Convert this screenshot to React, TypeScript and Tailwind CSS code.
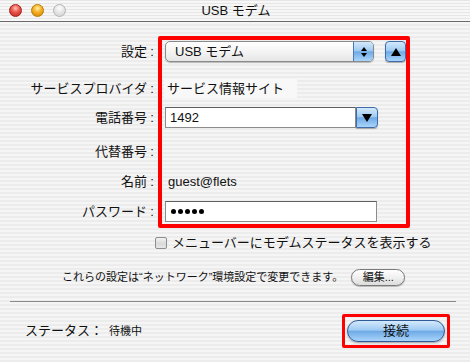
import type { ReactNode } from "react";

const font = "font-['Liberation_Sans','Noto_Sans_CJK_JP',sans-serif]";
const stripes =
  "bg-[repeating-linear-gradient(to_bottom,#ececec_0px,#ececec_2px,#f5f5f5_2px,#f5f5f5_4px)]";
const aquaBlue =
  "bg-[linear-gradient(to_bottom,#d4e9fc_0%,#9fcbf3_45%,#6faae6_52%,#a9d5fb_100%)]";

function Label({ text }: { text: string }) {
  return (
    <>
      <div className="w-[147px] text-right">{text}</div>
      <div className="w-[10px] text-center">:</div>
    </>
  );
}

function Row({ label, mt, children }: { label: string; mt: string; children?: ReactNode }) {
  return (
    <div className={`flex h-[21px] items-center ${mt}`}>
      <Label text={label} />
      <div className="ml-[8px] flex items-center">{children}</div>
    </div>
  );
}

function Light({ color }: { color: string }) {
  return <span className={`h-[13px] w-[13px] rounded-full ${color}`} />;
}

export default function App() {
  return (
    <div className={`relative h-[362px] w-[470px] overflow-hidden bg-white text-[13px] text-[#111] ${font}`}>
      <div className={`h-full w-full rounded-t-[6px] ${stripes}`}>
        {/* title bar */}
        <div className="relative flex h-[22px] items-center border-b border-[#6b6b6b] bg-[repeating-linear-gradient(to_bottom,#e6e6e6_0px,#e6e6e6_1px,#f7f7f7_1px,#f7f7f7_3px)]">
          <div className="ml-[9px] flex gap-[9px]">
            <Light color="border border-[#a8201a] bg-[radial-gradient(circle_at_50%_30%,#ffc2bb_0%,#ec5a4f_40%,#bd1f16_100%)]" />
            <Light color="border border-[#b77a00] bg-[radial-gradient(circle_at_50%_30%,#fff0b0_0%,#f8b429_40%,#d07d00_100%)]" />
            <Light color="border border-[#b4b4b4] bg-[radial-gradient(circle_at_50%_30%,#ffffff_0%,#e4e4e4_50%,#cfcfcf_100%)]" />
          </div>
          <div className="absolute left-0 right-0 top-0 flex h-[21px] items-center justify-center pl-[2px] text-[13px]">
            USB モデム
          </div>
        </div>

        {/* form */}
        <Row label="設定" mt="mt-[19px]">
          <div className="flex h-[21px] w-[209px] overflow-hidden rounded-[5px] border border-[#8a8a8a] bg-[linear-gradient(to_bottom,#ffffff_0%,#f4f4f4_50%,#e6e6e6_100%)] shadow-[0_1px_1px_rgba(0,0,0,0.25)]">
            <div className="flex flex-1 items-center pl-[9px]">USB モデム</div>
            <div className={`flex w-[20px] flex-col items-center justify-center gap-[2px] border-l border-[#4a78b8] ${aquaBlue}`}>
              <span className="h-0 w-0 border-x-[3px] border-b-[4px] border-x-transparent border-b-black" />
              <span className="h-0 w-0 border-x-[3px] border-t-[4px] border-x-transparent border-t-black" />
            </div>
          </div>
          <div className={`ml-[11px] flex h-[21px] w-[21px] items-center justify-center rounded-[4px] border border-[#3f6ba8] ${aquaBlue} shadow-[0_1px_1px_rgba(0,0,0,0.3)]`}>
            <span className="h-0 w-0 border-x-[5px] border-b-[8px] border-x-transparent border-b-black" />
          </div>
        </Row>

        <Row label="サービスプロバイダ" mt="mt-[16px]">
          <span className="-ml-[1px] w-[133px] bg-[#f8f8f8] pl-[3px]">サービス情報サイト</span>
        </Row>

        <Row label="電話番号" mt="mt-[8px]">
          <div className="flex h-[21px] w-[191px] items-center border border-[#8c8c8c] border-t-[#5e5e5e] bg-white pl-[4px]">
            1492
          </div>
          <div className={`flex h-[21px] w-[22px] items-center justify-center rounded-r-[4px] border border-[#3f6ba8] ${aquaBlue} shadow-[0_1px_1px_rgba(0,0,0,0.3)]`}>
            <span className="h-0 w-0 border-x-[5px] border-t-[8px] border-x-transparent border-t-black" />
          </div>
        </Row>

        <Row label="代替番号" mt="mt-[13px]" />

        <Row label="名前" mt="mt-[9px]">
          <span className="pl-[3px]">guest@flets</span>
        </Row>

        <Row label="パスワード" mt="mt-[9px]">
          <div className="flex h-[21px] w-[212px] items-center gap-[2px] border border-[#8c8c8c] border-t-[#5e5e5e] bg-white pl-[5px]">
            {[0, 1, 2, 3, 4].map((i) => (
              <span key={i} className="h-[5px] w-[5px] rounded-full bg-black" />
            ))}
          </div>
        </Row>

        <div className="mt-[10px] flex h-[21px] items-center pl-[155px]">
          <span className="h-[12px] w-[12px] rounded-[2px] border border-[#8d8d8d] bg-[linear-gradient(to_bottom,#f2f2f2_0%,#d9d9d9_60%,#e9e9e9_100%)]" />
          <span className="ml-[5px]">メニューバーにモデムステータスを表示する</span>
        </div>

        <div className="mt-[14px] flex h-[21px] items-center pl-[62px] text-[11px]">
          <span>これらの設定は“ネットワーク”環境設定で変更できます。</span>
          <div className="ml-[8px] flex h-[17px] w-[54px] items-center justify-center rounded-full border border-[#7a7a7a] bg-[linear-gradient(to_bottom,#ffffff_0%,#f0f0f0_50%,#dcdcdc_100%)] text-[11px] shadow-[0_1px_1px_rgba(0,0,0,0.25)]">
            編集...
          </div>
        </div>

        <div className="mx-[10px] mt-[13px] h-px w-[446px] bg-[#8a8a8a]" />

        <div className="mt-[12px] flex h-[34px] items-center">
          <span className="ml-[25px]">ステータス：</span>
          <span className="ml-[6px] text-[11px]">待機中</span>
          <div className="ml-auto mr-[20px] flex h-[34px] w-[108px] items-center justify-center rounded-[2px] border-[3px] border-[#ff0000]">
            <div className={`flex h-[22px] w-[98px] items-center justify-center rounded-full border border-[#2f5a98] ${aquaBlue} shadow-[0_1px_2px_rgba(0,0,0,0.35)]`}>
              接続
            </div>
          </div>
        </div>
      </div>

      {/* red annotation box */}
      <div className="absolute left-[158px] top-[36px] h-[192px] w-[252px] rounded-[2px] border-4 border-[#ff0000]" />
    </div>
  );
}
